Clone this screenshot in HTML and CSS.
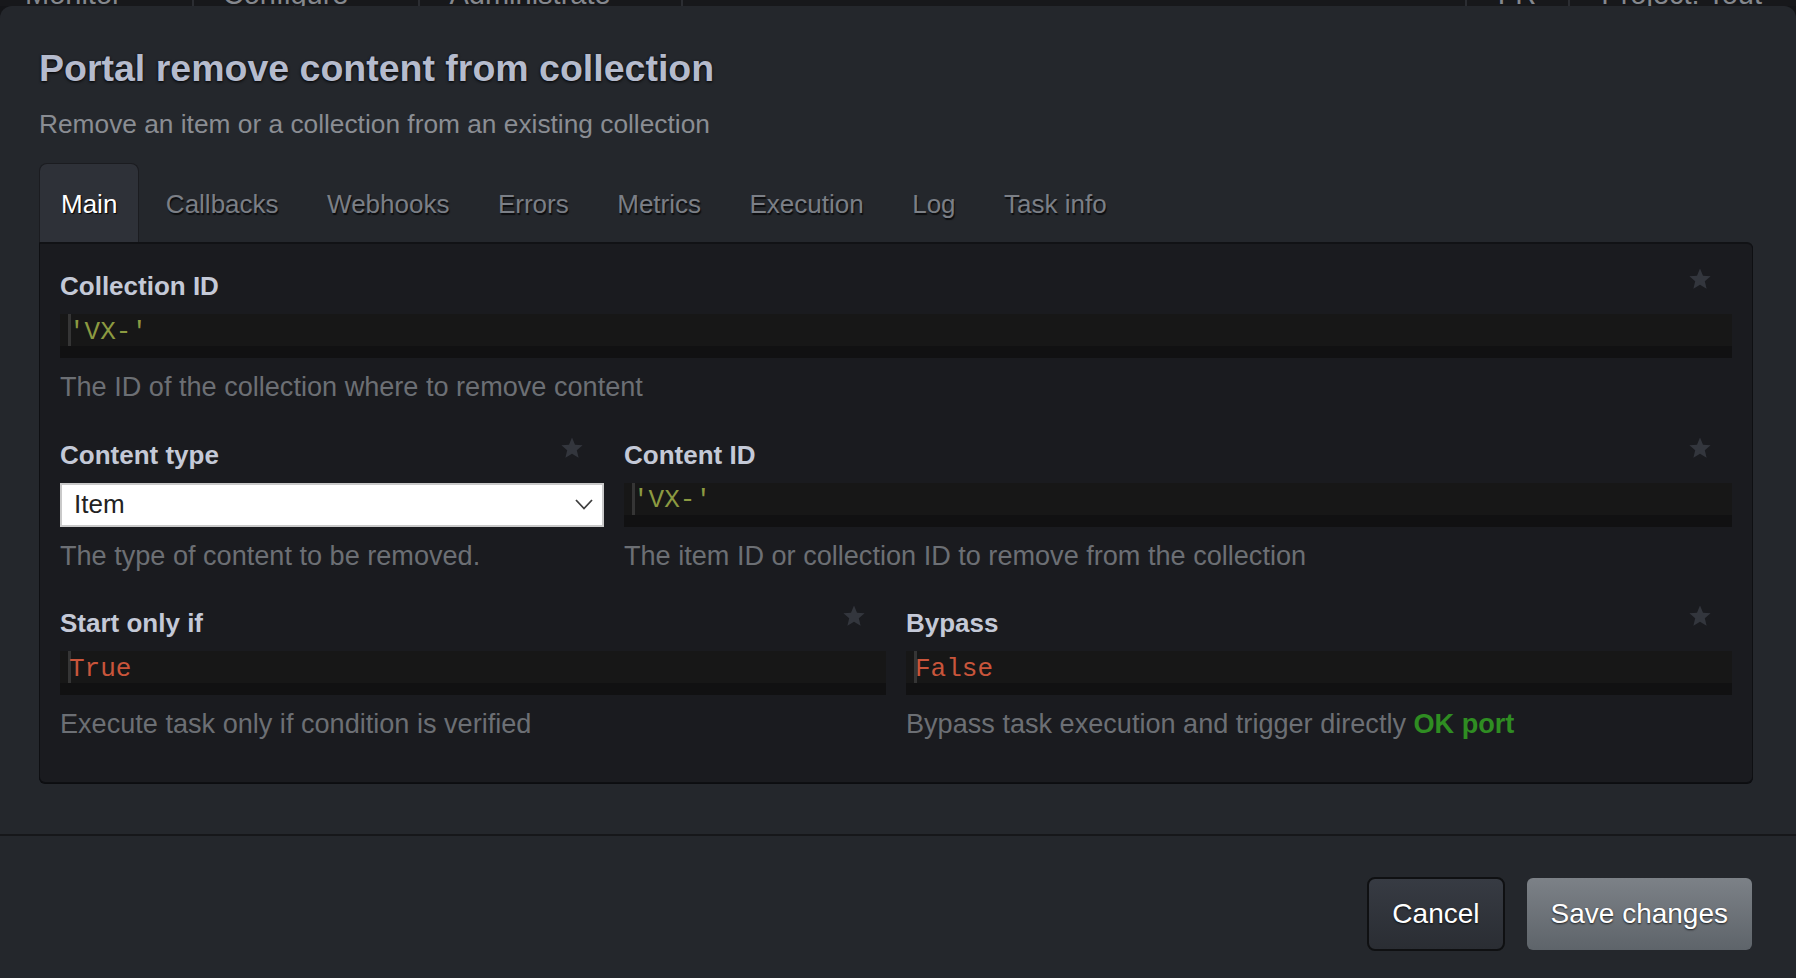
FILE: index.html
```html
<!DOCTYPE html>
<html lang="en">
<head>
<meta charset="utf-8">
<title>Portal remove content from collection</title>
<link rel="stylesheet" href="styles.css">
</head>
<body>
<div class="topnav">
  <div class="topnav-row">
    <div class="nav-item first">Monitor<span class="caret">▾</span></div>
    <div class="nav-item">Configure<span class="caret">▾</span></div>
    <div class="nav-item">Administrate<span class="caret">▾</span></div>
    <div class="nav-item right">FR</div>
    <div class="nav-item last">Project: Tout</div>
  </div>
</div>

<div class="modal">
  <div class="modal-body">
    <h1 class="title">Portal remove content from collection</h1>
    <p class="subtitle">Remove an item or a collection from an existing collection</p>

    <ul class="tabs">
      <li class="tab active">Main</li>
      <li class="tab">Callbacks</li>
      <li class="tab">Webhooks</li>
      <li class="tab">Errors</li>
      <li class="tab">Metrics</li>
      <li class="tab">Execution</li>
      <li class="tab">Log</li>
      <li class="tab">Task info</li>
    </ul>

    <div class="panel">
      <div class="row">
        <div class="col col-12 field">
          <label class="label">Collection ID</label>
          <svg class="star" viewBox="0 0 24 24"><path d="M12 1.5l3 7.2 7.6.6-5.8 5 1.8 7.5L12 17.7l-6.6 4.1 1.8-7.5-5.8-5 7.6-.6z"/></svg>
          <div class="code"><div class="code-line"><span class="cursor"></span><span class="str">'VX-'</span></div><div class="code-scroll"></div></div>
          <div class="help">The ID of the collection where to remove content</div>
        </div>
      </div>

      <div class="row">
        <div class="col col-4 field">
          <label class="label">Content type</label>
          <svg class="star" viewBox="0 0 24 24"><path d="M12 1.5l3 7.2 7.6.6-5.8 5 1.8 7.5L12 17.7l-6.6 4.1 1.8-7.5-5.8-5 7.6-.6z"/></svg>
          <div class="select"><span>Item</span><svg class="chev" viewBox="0 0 18 11"><polyline points="1,1 9,9.5 17,1"/></svg></div>
          <div class="help">The type of content to be removed.</div>
        </div>
        <div class="col col-8 field">
          <label class="label">Content ID</label>
          <svg class="star" viewBox="0 0 24 24"><path d="M12 1.5l3 7.2 7.6.6-5.8 5 1.8 7.5L12 17.7l-6.6 4.1 1.8-7.5-5.8-5 7.6-.6z"/></svg>
          <div class="code"><div class="code-line"><span class="cursor"></span><span class="str">'VX-'</span></div><div class="code-scroll"></div></div>
          <div class="help">The item ID or collection ID to remove from the collection</div>
        </div>
      </div>

      <div class="row">
        <div class="col col-6 field">
          <label class="label">Start only if</label>
          <svg class="star" viewBox="0 0 24 24"><path d="M12 1.5l3 7.2 7.6.6-5.8 5 1.8 7.5L12 17.7l-6.6 4.1 1.8-7.5-5.8-5 7.6-.6z"/></svg>
          <div class="code"><div class="code-line"><span class="cursor"></span><span class="kw">True</span></div><div class="code-scroll"></div></div>
          <div class="help">Execute task only if condition is verified</div>
        </div>
        <div class="col col-6 field">
          <label class="label">Bypass</label>
          <svg class="star" viewBox="0 0 24 24"><path d="M12 1.5l3 7.2 7.6.6-5.8 5 1.8 7.5L12 17.7l-6.6 4.1 1.8-7.5-5.8-5 7.6-.6z"/></svg>
          <div class="code"><div class="code-line"><span class="cursor"></span><span class="kw">False</span></div><div class="code-scroll"></div></div>
          <div class="help">Bypass task execution and trigger directly <strong class="ok">OK port</strong></div>
        </div>
      </div>
    </div>
  </div>

  <div class="modal-footer">
    <button class="btn btn-cancel">Cancel</button>
    <button class="btn btn-save">Save changes</button>
  </div>
</div>
</body>
</html>
```

FILE: styles.css
```css
* { box-sizing: border-box; }
html, body { margin: 0; height: 100%; }
body {
  background: #141518;
  font-family: "Liberation Sans", Arial, Helvetica, sans-serif;
  overflow: hidden;
}

/* top navigation strip (mostly hidden behind the modal) */
.topnav {
  height: 6px;
  overflow: hidden;
  background: #17181b;
}
.topnav-row {
  display: flex;
  margin-top: -22px;
  height: 40px;
  font-size: 29px;
  line-height: 32px;
  color: #85888e;
}
.nav-item {
  display: flex;
  padding: 0 34px 0 29px;
  border-right: 2px solid #2b2d32;
}
.nav-item.first { padding-left: 25px; }
.nav-item.right { margin-left: auto; border-left: 2px solid #2b2d32; padding: 0 32px 0 31px; }
.nav-item.last { border-right: none; padding-left: 31px; }
.caret { margin-left: 28px; font-size: 16px; }

/* modal */
.modal {
  background: #24272c;
  border-radius: 12px 12px 0 0;
  height: calc(100% - 6px);
}
.modal-body {
  padding: 40px 43px 51px 39px;
  border-bottom: 2px solid #16171a;
}
.title {
  margin: 0;
  font-size: 37.5px;
  line-height: 44px;
  font-weight: bold;
  color: #b5bbcd;
  text-shadow: 0 1px 3px #000;
}
.subtitle {
  margin: 18px 0 0 0;
  font-size: 26.3px;
  line-height: 32px;
  color: #8a8d93;
}

/* tabs */
.tabs {
  list-style: none;
  margin: 23px 0 0 0;
  padding: 0;
  display: flex;
}
.tab {
  font-size: 26px;
  line-height: 36px;
  padding: 22px 21px 20px 21px;
  margin-right: 4.5px;
  color: #7b7f86;
  text-shadow: 1px 2px 1px #0c0d0f;
  border: 1px solid transparent;
  border-bottom: none;
  border-radius: 8px 8px 0 0;
}
.tab.active {
  background: #2e3138;
  border-color: #1b1c20;
  color: #ffffff;
  text-shadow: 1px 1px 1px #000;
}

/* panel */
.panel {
  background: #1a1b1f;
  border: 1px solid #0e0f12;
  border-top: 2px solid #111215;
  border-radius: 0 6px 6px 6px;
  padding: 27px 20px 5.5px 20px;
  box-shadow: 0 1px 0 #0c0d10;
}
.row {
  display: flex;
  margin: 0 -10px;
}
.col { padding: 0 10px; }
.col-12 { width: 100%; }
.col-4 { width: 33.3333%; }
.col-8 { width: 66.6667%; }
.col-6 { width: 50%; }

.field {
  position: relative;
  margin-bottom: 34.5px;
}
.label {
  display: block;
  font-size: 26px;
  line-height: 30px;
  font-weight: bold;
  color: #c4c9d7;
  margin-bottom: 13px;
}
.star {
  position: absolute;
  top: -4px;
  right: 30px;
  width: 24px;
  height: 24px;
  fill: #33363d;
}

.code {
  height: 44px;
  background: #111112;
}
.code-line {
  height: 32px;
  background: #171717;
  display: flex;
  align-items: center;
  padding-left: 8px;
  font-family: "Liberation Mono", "Courier New", monospace;
  font-size: 26px;
  line-height: 32px;
}
.cursor {
  width: 3px;
  height: 32px;
  background: #353535;
  margin-right: -2px;
}
.code-line span:last-child { padding-top: 3px; }
.str { color: #8c9a41; }
.kw { color: #c9553b; }

.select {
  height: 44px;
  background: #ffffff;
  border: 2px solid #c9c9c9;
  display: flex;
  align-items: center;
  justify-content: space-between;
  padding: 0 9px 0 12px;
  font-size: 26px;
  color: #222;
}
.chev {
  width: 18px;
  height: 11px;
  fill: none;
  stroke: #3f3f3f;
  stroke-width: 1.8;
}

.help {
  margin-top: 11px;
  font-size: 27.1px;
  line-height: 36px;
  color: #6c6f74;
}
.ok { color: #2f8d22; font-weight: bold; }

/* footer */
.modal-footer {
  display: flex;
  justify-content: flex-end;
  align-items: center;
  gap: 22px;
  padding: 41px 44px 0 0;
}
.btn {
  font-family: "Liberation Sans", Arial, sans-serif;
  font-size: 28px;
  color: #ffffff;
  text-shadow: 0 1px 2px rgba(0,0,0,0.75);
  cursor: pointer;
}
.btn-cancel {
  height: 74px;
  padding: 0 23px;
  background: linear-gradient(#373b43, #2a2d33);
  border: 2px solid #0f1012;
  border-radius: 8px;
}
.btn-save {
  height: 72px;
  padding: 0 24px;
  background: linear-gradient(#7c8187, #5e646a);
  border: none;
  border-radius: 6px;
}
```
